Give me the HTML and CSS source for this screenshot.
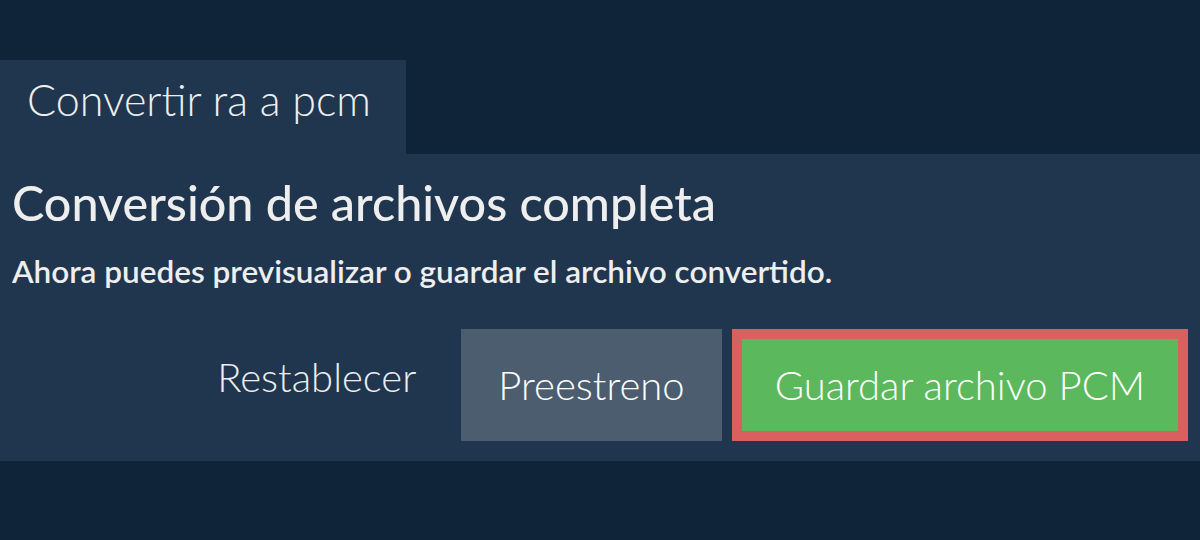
FILE: index.html
```html
<!DOCTYPE html>
<html lang="es">
<head>
    <meta charset="UTF-8">
    <meta name="viewport" content="width=device-width, initial-scale=1.0">
    <title>Convertir ra a pcm</title>
    <link rel="stylesheet" href="styles.css">
</head>
<body>

<div class="page">
    <div class="tabs">
        <div class="tab">Convertir ra a pcm</div>
    </div>
    <div class="panel">
        <h2 class="title">Conversión de archivos completa</h2>
        <p class="subtitle">Ahora puedes previsualizar o guardar el archivo convertido.</p>
        <div class="actions">
            <button class="btn btn-link">Restablecer</button>
            <button class="btn btn-preview">Preestreno</button>
            <button class="btn btn-save">Guardar archivo PCM</button>
        </div>
    </div>
</div>

</body>
</html>
```

FILE: styles.css
```css
body {
    margin: 0;
    background-color: #0f2339;
    font-family: Lato, "Open Sans", sans-serif;
    color: #eeeeee;
}
.page {
    padding-top: 60px;
}
.tabs {
    display: flex;
}
.tab {
    background-color: #20364e;
    font-weight: 300;
    font-size: 43px;
    line-height: 80px;
    padding: 0 0 14px 27px;
    width: 379px;
}
.panel {
    background-color: #20364e;
    padding: 20px 12px 20px 12px;
}
.title {
    margin: 0;
    font-size: 48.5px;
    font-weight: 500;
    line-height: 56px;
}
.subtitle {
    margin: 23px 0 0 0;
    font-size: 31.5px;
    font-weight: 600;
    line-height: 36px;
}
.actions {
    display: flex;
    justify-content: flex-end;
    align-items: flex-start;
    gap: 10px;
    margin-top: 40px;
}
.btn {
    font-family: inherit;
    font-weight: 300;
    font-size: 40px;
    line-height: 48px;
    border: none;
    color: #ffffff;
    cursor: pointer;
}
.btn-link {
    background: none;
    color: #eeeeee;
    padding: 24px 35px 0 0;
}
.btn-preview {
    background-color: #4b5d6e;
    height: 112px;
    padding: 0 37px;
}
.btn-save {
    background-color: #5cb85c;
    border: 10px solid #d9605e;
    height: 112px;
    padding: 0 33px;
}
```
